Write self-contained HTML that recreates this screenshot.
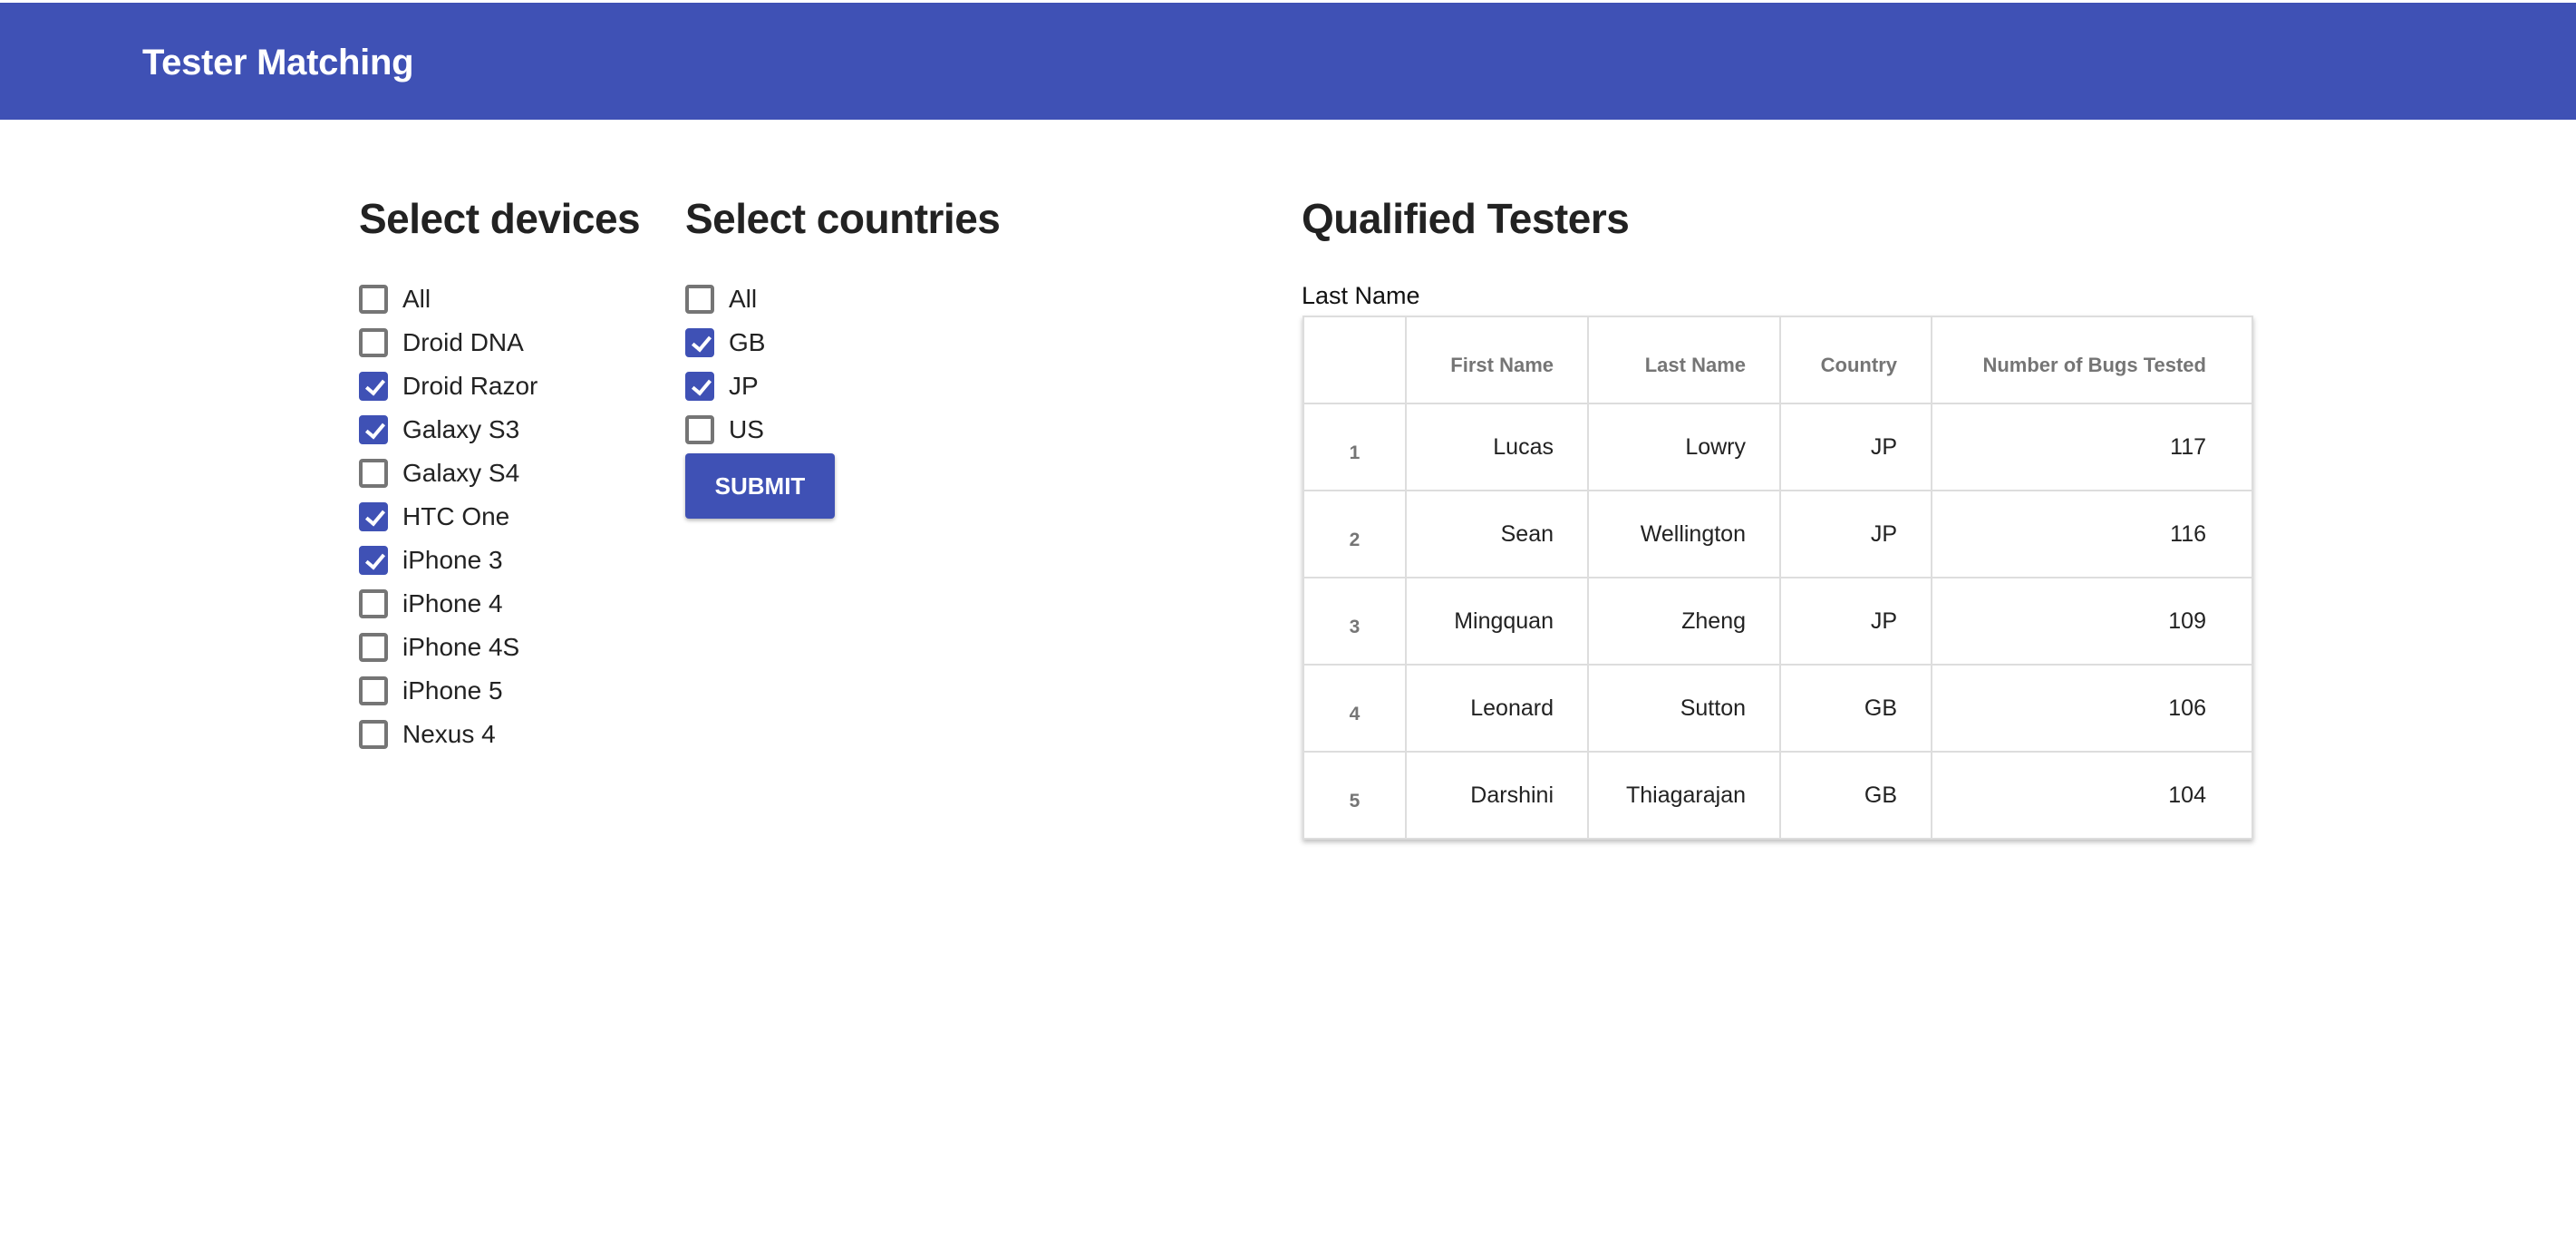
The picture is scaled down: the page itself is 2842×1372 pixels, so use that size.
<!DOCTYPE html>
<html><head><meta charset="utf-8"><style>
*{margin:0;padding:0;box-sizing:border-box}
body{width:2842px;height:1372px;background:#fff;font-family:"Liberation Sans",sans-serif;color:#212121;position:relative;overflow:hidden}
.hdr{position:absolute;left:0;top:3px;width:2842px;height:129px;background:#3f51b5}
.hdr span{position:absolute;left:157px;top:44px;color:#fff;font-size:40px;font-weight:bold;letter-spacing:-0.3px}
h2{position:absolute;font-size:46px;font-weight:bold;top:214px;letter-spacing:-0.5px;color:#222}
.cb{position:absolute;height:32px}
.cb i{position:absolute;left:0;top:0;width:32px;height:32px;border:4px solid #757575;border-radius:4px}
.cb.on i{background:#3f51b5;border-color:#3f51b5}
.cb.on i:after{content:"";position:absolute;left:8px;top:1px;width:8px;height:16px;border:solid #fff;border-width:0 4px 4px 0;transform:rotate(40deg)}
.cb span{position:absolute;left:48px;top:0px;font-size:28px;white-space:nowrap;color:#222}
.btn{position:absolute;left:756px;top:500px;width:165px;height:72px;background:#3f51b5;border-radius:4px;color:#fff;font-weight:bold;font-size:26px;text-align:center;line-height:72px;box-shadow:0 2px 4px rgba(0,0,0,.3)}
.lbl{position:absolute;left:1436px;top:311px;font-size:27px;color:#111}
table{position:absolute;left:1437px;top:348px;width:1049px;border-collapse:collapse;box-shadow:0 3px 5px rgba(0,0,0,.25);table-layout:fixed}
td,th{border:2px solid #ddd;text-align:right;padding-right:37px;font-size:25px;color:#222;font-weight:normal;height:96px}
th{color:#757575;font-weight:bold;font-size:22px;padding-top:12px}
td:last-child,th:last-child{padding-right:50px}
td.n{text-align:center;padding:14px 0 0 0;color:#757575;font-weight:bold;font-size:21px}
</style></head><body>
<div class="hdr"><span>Tester Matching</span></div>
<h2 style="left:396px">Select devices</h2>
<h2 style="left:756px">Select countries</h2>
<h2 style="left:1436px">Qualified Testers</h2>
<div class="cb" style="left:396px;top:314px"><i></i><span>All</span></div>
<div class="cb" style="left:396px;top:362px"><i></i><span>Droid DNA</span></div>
<div class="cb on" style="left:396px;top:410px"><i></i><span>Droid Razor</span></div>
<div class="cb on" style="left:396px;top:458px"><i></i><span>Galaxy S3</span></div>
<div class="cb" style="left:396px;top:506px"><i></i><span>Galaxy S4</span></div>
<div class="cb on" style="left:396px;top:554px"><i></i><span>HTC One</span></div>
<div class="cb on" style="left:396px;top:602px"><i></i><span>iPhone 3</span></div>
<div class="cb" style="left:396px;top:650px"><i></i><span>iPhone 4</span></div>
<div class="cb" style="left:396px;top:698px"><i></i><span>iPhone 4S</span></div>
<div class="cb" style="left:396px;top:746px"><i></i><span>iPhone 5</span></div>
<div class="cb" style="left:396px;top:794px"><i></i><span>Nexus 4</span></div>
<div class="cb" style="left:756px;top:314px"><i></i><span>All</span></div>
<div class="cb on" style="left:756px;top:362px"><i></i><span>GB</span></div>
<div class="cb on" style="left:756px;top:410px"><i></i><span>JP</span></div>
<div class="cb" style="left:756px;top:458px"><i></i><span>US</span></div>
<div class="btn">SUBMIT</div>
<div class="lbl">Last Name</div>
<table>
<tr><th style="width:113px"></th><th style="width:201px">First Name</th><th style="width:212px">Last Name</th><th style="width:167px">Country</th><th>Number of Bugs Tested</th></tr>
<tr><td class="n">1</td><td>Lucas</td><td>Lowry</td><td>JP</td><td>117</td></tr>
<tr><td class="n">2</td><td>Sean</td><td>Wellington</td><td>JP</td><td>116</td></tr>
<tr><td class="n">3</td><td>Mingquan</td><td>Zheng</td><td>JP</td><td>109</td></tr>
<tr><td class="n">4</td><td>Leonard</td><td>Sutton</td><td>GB</td><td>106</td></tr>
<tr><td class="n">5</td><td>Darshini</td><td>Thiagarajan</td><td>GB</td><td>104</td></tr>
</table>
</body></html>
